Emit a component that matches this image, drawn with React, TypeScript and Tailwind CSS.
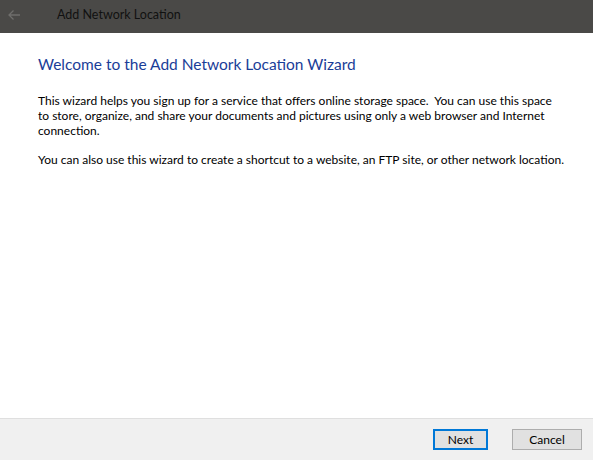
export default function App() {
  return (
    <div
      className="flex h-[460px] w-[593px] flex-col bg-white text-[12px] text-black"
      style={{ fontFamily: 'Lato, "Noto Sans", sans-serif' }}
    >
      <div className="flex h-[33px] shrink-0 items-center bg-[#4a4947] pb-[3px]">
        <svg width="14" height="12" viewBox="0 0 14 12" className="ml-[7px]" fill="none" stroke="#6f6e6c" strokeWidth="1.3">
          <path d="M13 6H2M6.5 1.5 2 6l4.5 4.5" />
        </svg>
        <span className="ml-[36px] text-[12.5px] text-[#111]">Add Network Location</span>
      </div>

      <div className="flex-1 px-[38px] pt-[20px]">
        <h1 className="text-[15.5px] leading-[22px] text-[#1a3d98]">Welcome to the Add Network Location Wizard</h1>
        <p className="mt-[18px] leading-[15px]">
          This wizard helps you sign up for a service that offers online storage space.&nbsp; You can use this space
          <br />
          to store, organize, and share your documents and pictures using only a web browser and Internet
          <br />
          connection.
        </p>
        <p className="mt-[14px] whitespace-nowrap leading-[15px]">
          You can also use this wizard to create a shortcut to a website, an FTP site, or other network location.
        </p>
      </div>

      <div className="flex h-[42px] shrink-0 items-center justify-end gap-[24px] border-t border-[#dfdfdf] bg-[#f0f0f0] pr-[11px]">
        <button className="h-[21px] w-[55px] border-2 border-[#0078d7] bg-[#e1e1e1] text-[12px] leading-none">Next</button>
        <button className="h-[21px] w-[70px] border border-[#adadad] bg-[#e1e1e1] text-[12px] leading-none">Cancel</button>
      </div>
    </div>
  );
}
